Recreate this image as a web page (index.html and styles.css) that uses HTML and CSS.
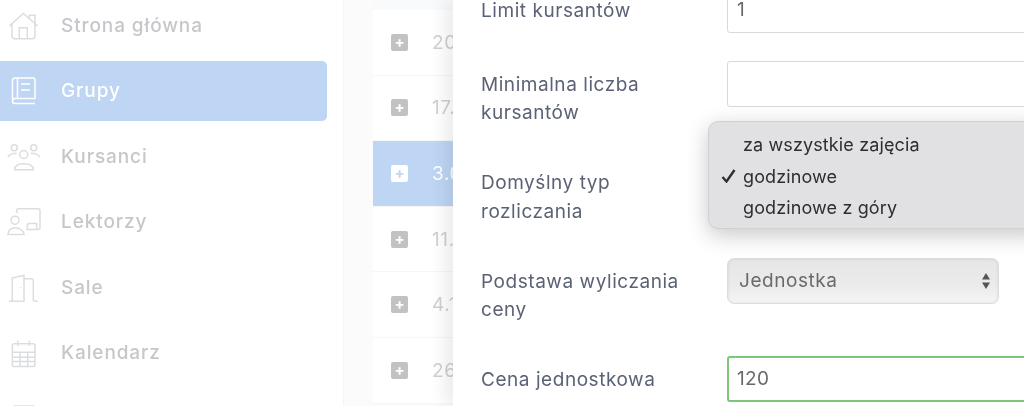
FILE: index.html
```html
<!DOCTYPE html>
<html lang="pl">
<head>
    <meta charset="UTF-8">
    <meta name="viewport" content="width=device-width, initial-scale=1.0">
    <title>Grupy</title>
    <link rel="stylesheet" href="styles.css">
</head>
<body>
    <div class="app">
        <aside class="sidebar">
            <a class="nav-item">
                <svg class="nav-icon" viewBox="0 0 29 29"><path d="M.3 15 14.300 2.500 28.700 15M3 13v11.800a3 3 0 0 0 3 3h17a3 3 0 0 0 3-3V13M10.300 27.800v-11h8v11M20.300 7.900V4.200H26v8.700"/></svg>
                <span>Strona główna</span>
            </a>
            <a class="nav-item active">
                <svg class="nav-icon" viewBox="0 0 29 29"><path d="M3.500 25V4.500A2.500 2.500 0 0 1 6 2h18a2 2 0 0 1 2 2v18.500H6a2.500 2.500 0 0 0 0 5h20M8.500 2v20.500M12 8h9M12 14h9"/></svg>
                <span>Grupy</span>
            </a>
            <a class="nav-item">
                <svg class="nav-icon" viewBox="0 0 29 29"><circle cx="5.300" cy="5.800" r="3"/><circle cx="24.700" cy="5.800" r="3"/><circle cx="14.700" cy="12.500" r="4"/><path d="M-1 15.200c1-3 4-4 8.700-4M30.500 15.200c-1-3-4-4-8.700-4M5.700 27.800c0-4 3.500-6 9-6s9.600 2 9.600 6z"/></svg>
                <span>Kursanci</span>
            </a>
            <a class="nav-item">
                <svg class="nav-icon" viewBox="0 0 29 29"><path d="M7.700 6V3.800a2 2 0 0 1 2-2H29a2 2 0 0 1 2 2v16.700a2 2 0 0 1-2 2H18.300v-4a2 2 0 0 1 2-2h7.400v6"/><circle cx="6" cy="13.200" r="4"/><path d="M-1 27.500c0-4 3-6.700 7-6.700s9 2.700 9 6.700z"/></svg>
                <span>Lektorzy</span>
            </a>
            <a class="nav-item">
                <svg class="nav-icon" viewBox="0 0 29 29"><path d="M0 28.200h15V2.500L3.300 4.800v23.400M15 5.800h7.300a2 2 0 0 1 2 2v18.400a2 2 0 0 0 2 2h2.500M11.700 14.300v1"/></svg>
                <span>Sale</span>
            </a>
            <a class="nav-item">
                <svg class="nav-icon" viewBox="0 0 29 29"><rect x="3.300" y="5.800" width="22.700" height="22.700" rx="2"/><path d="M8.700 2.500V8M20.300 2.500V8M3.300 14.200H26M3.300 19.200H26M3.300 23.500H26M11 14.200v14.300M18.700 14.200v14.300"/></svg>
                <span>Kalendarz</span>
            </a>
            <a class="nav-item">
                <svg class="nav-icon" viewBox="0 0 29 29"><rect x="4" y="2" width="22" height="26" rx="2"/></svg>
            </a>
        </aside>

        <main class="content">
            <div class="table">
                <div class="table-head"></div>
                <div class="row"><span class="expand">+</span><span class="cell">20</span></div>
                <div class="row"><span class="expand">+</span><span class="cell">17.</span></div>
                <div class="row selected"><span class="expand">+</span><span class="cell">3.0</span></div>
                <div class="row"><span class="expand">+</span><span class="cell">11.1</span></div>
                <div class="row"><span class="expand">+</span><span class="cell">4.1</span></div>
                <div class="row"><span class="expand">+</span><span class="cell">26</span></div>
            </div>
        </main>

        <section class="panel">
            <form class="form">
                <div class="form-row">
                    <label>Limit kursantów</label>
                    <div class="field">1</div>
                </div>
                <div class="form-row">
                    <label>Minimalna liczba<br>kursantów</label>
                    <div class="field"></div>
                </div>
                <div class="form-row">
                    <label>Domyślny typ<br>rozliczania</label>
                    <div class="field"></div>
                </div>
                <div class="form-row">
                    <label>Podstawa wyliczania<br>ceny</label>
                    <div class="select">
                        <span>Jednostka</span>
                        <svg class="select-arrows" viewBox="0 0 8 16"><path d="M4 0 8 6.500H0zM4 16 0 9.500h8z"/></svg>
                    </div>
                </div>
                <div class="form-row">
                    <label>Cena jednostkowa</label>
                    <div class="field valid">120</div>
                </div>
            </form>

            <ul class="dropdown">
                <li>za wszystkie zajęcia</li>
                <li class="checked">
                    <svg class="check" viewBox="0 0 15 14"><path d="M1.500 8 5.500 12.500 13.500 1"/></svg>
                    godzinowe
                </li>
                <li>godzinowe z góry</li>
            </ul>
        </section>
    </div>
</body>
</html>
```

FILE: styles.css
```css
* { box-sizing: border-box; }
html, body { margin: 0; height: 406px; overflow: hidden; background: #fff; }
body { font-family: "Inter", "Open Sans", sans-serif; }

.app { display: flex; height: 406px; position: relative; overflow: hidden; background: #fbfbfb; filter: blur(.35px); }

/* sidebar */
.sidebar { width: 344px; flex: none; height: 406px; overflow: hidden; background: #fff; border-right: 1px solid #f5f5f5; padding-right: 16px; display: flex; flex-direction: column; gap: 5.500px; }
.nav-item { flex: none; height: 60px; display: flex; align-items: center; gap: 23px; padding-left: 9px; font-size: 19px; font-weight: 500; letter-spacing: .9px; color: #c6c7ca; border-radius: 0 5px 5px 0; }
.nav-item:first-child { margin-top: -5px; }
.nav-item.active { background: #bed5f4; color: #fff; }
.nav-icon { width: 29px; height: 29px; flex: none; fill: none; stroke: #dcdde0; stroke-width: 1.500; overflow: visible; }
.active .nav-icon { stroke: #fff; }

/* table behind the panel */
.content { flex: 1; padding-left: 29px; }
.table { width: 80px; overflow: hidden; background: #fff; }
.table-head { height: 10px; background: #f8fafc; }
.row { height: 65.600px; display: flex; align-items: center; gap: 24px; padding-left: 18px; border-bottom: 1px solid #f7f7f7; font-size: 19px; letter-spacing: .6px; color: #cfd0d2; white-space: nowrap; }
.row.selected { background: #bed5f4; color: #fff; }
.expand { width: 17px; height: 17px; flex: none; background: #c0c2c3; color: #fff; border-radius: 2px; font-size: 15px; font-weight: 700; letter-spacing: 0; line-height: 16px; text-align: center; }
.selected .expand { background: #fff; color: #bed5f4; }

/* edit panel */
.panel { position: absolute; top: 0; left: 453px; right: 0; height: 406px; overflow: hidden; background: #fff; box-shadow: -8px 0 16px rgba(0, 0, 0, .08); }
.form { margin-top: -13px; padding-left: 28px; display: flex; flex-direction: column; gap: 28px; }
.form-row { display: grid; grid-template-columns: 246px 1fr; align-items: start; }
.form-row label { padding: 10px 0 4px; font-size: 19px; letter-spacing: .55px; line-height: 28.200px; color: #5b6275; white-space: nowrap; }
.field { height: 46px; width: 340px; padding: 0 9px; border: 1px solid #d9d9d9; border-radius: 3px; font-size: 19px; letter-spacing: .3px; line-height: 44px; color: #6a6a6a; background: #fff; }
.field.valid { border: 2px solid #7cc57b; line-height: 42px; padding: 0 8px; }
.select { height: 46px; width: 272px; padding: 0 11px; display: flex; align-items: center; justify-content: space-between; border: 1px solid #dcdcdc; border-radius: 7px; font-size: 19px; letter-spacing: .55px; color: #6a6a6a; background: linear-gradient(#e6e6e6, #ebebeb 60%, #f5f5f5); box-shadow: inset 0 0 3px rgba(0, 0, 0, .1); }
.select-arrows { width: 8px; height: 16px; fill: #555; margin-right: -3px; }

/* native looking select menu */
.dropdown { position: absolute; top: 121px; left: 255px; width: 340px; height: 108px; margin: 0; padding: 7px 0 0 34px; list-style: none; background: #e1e1e3; border: 1px solid #d0d0d2; border-radius: 10px; box-shadow: 0 6px 22px rgba(0, 0, 0, .22); font-size: 18px; letter-spacing: .12px; line-height: 31.500px; color: #2e2e2e; }
.dropdown .checked { position: relative; }
.check { position: absolute; left: -22px; top: 8px; width: 15px; height: 14px; fill: none; stroke: #2e2e2e; stroke-width: 2.400; }
```
